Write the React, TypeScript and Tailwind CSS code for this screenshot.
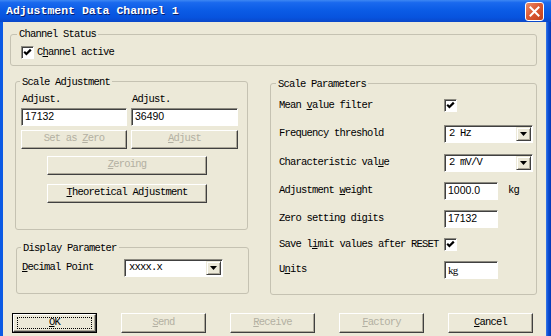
import React from "react";

const mono = "font-['Liberation_Mono','DejaVu_Sans_Mono',monospace] text-[10.5px] tracking-[-0.8px] text-black";

function U({ children }: { children: React.ReactNode }) {
  return <span className="underline underline-offset-[1px]">{children}</span>;
}

function Group({
  title,
  legend = "ml-[5px]",
  className = "",
  inner = "",
  children,
}: {
  title: string;
  legend?: string;
  className?: string;
  inner?: string;
  children: React.ReactNode;
}) {
  return (
    <fieldset className={"min-w-0 rounded-[3px] border border-[#c5c2b2] p-0 " + className}>
      <legend className={"px-[2px] leading-[12px] " + legend}>{title}</legend>
      <div className={inner}>{children}</div>
    </fieldset>
  );
}

function Btn({
  children,
  disabled,
  isDefault,
  className = "",
}: {
  children: React.ReactNode;
  disabled?: boolean;
  isDefault?: boolean;
  className?: string;
}) {
  const face =
    "flex h-full w-full items-center justify-center border border-t-white border-l-white border-b-[#404040] border-r-[#404040] bg-[#ece9d8] shadow-[inset_-1px_-1px_0_#aca899]";
  return (
    <div className={(isDefault ? "border border-black " : "") + className}>
      <div className={face + (disabled ? " text-[#b3b0a2]" : " text-black")}>
        {isDefault ? (
          <div className="flex h-[12px] w-[75px] items-center justify-center border border-dotted border-black">
            <span>{children}</span>
          </div>
        ) : (
          <span>{children}</span>
        )}
      </div>
    </div>
  );
}

const sunken =
  "border border-t-[#8c8a80] border-l-[#8c8a80] border-b-white border-r-white shadow-[inset_1px_1px_0_#404040] bg-white";

function Field({ value, className = "", sans = true }: { value: string; className?: string; sans?: boolean }) {
  return (
    <div
      className={
        "flex h-[18px] items-center pl-[3px] " +
        sunken +
        " " +
        (sans ? "font-['Liberation_Sans',Arial,sans-serif] text-[10.5px] tracking-normal " : "") +
        className
      }
    >
      {value}
    </div>
  );
}

function Combo({ value, className = "" }: { value: string; className?: string }) {
  return (
    <div className={"flex h-[18px] items-stretch " + sunken + " " + className}>
      <div className="flex flex-1 items-center pl-[4px]">{value}</div>
      <div className="m-px flex w-[15px] items-center justify-center border border-t-[#ece9d8] border-l-[#ece9d8] border-b-[#404040] border-r-[#404040] bg-[#ece9d8] shadow-[inset_1px_1px_0_#fff,inset_-1px_-1px_0_#aca899]">
        <svg width="7" height="4" viewBox="0 0 7 4">
          <path d="M0 0h7L3.5 4z" fill="#000" />
        </svg>
      </div>
    </div>
  );
}

function Check() {
  return (
    <div className={"flex h-[13px] w-[13px] shrink-0 items-center justify-center " + sunken}>
      <svg width="9" height="9" viewBox="0 0 9 9">
        <path d="M1.2 3.8 L3.4 6 L7.8 1.6" stroke="#000" strokeWidth="2.2" fill="none" />
      </svg>
    </div>
  );
}

function Row({ label, className = "", children }: { label: React.ReactNode; className?: string; children: React.ReactNode }) {
  return (
    <div className={"flex h-[18px] items-center " + className}>
      <div className="w-[165px] shrink-0">{label}</div>
      {children}
    </div>
  );
}

export default function App() {
  return (
    <div className={"flex h-[336px] w-[551px] flex-col overflow-hidden " + mono}>
      {/* Title bar */}
      <div className="flex h-[22px] shrink-0 items-center justify-between bg-[linear-gradient(to_bottom,#3d87f3_0%,#1a69ee_12%,#0b5ce6_45%,#0753de_80%,#0a48c9_100%)] pl-[6px] pr-[7px]">
        <span className="text-[11.5px] font-bold tracking-normal text-white [text-shadow:1px_1px_0_#0a1d6a]">
          Adjustment Data Channel 1
        </span>
        <div className="flex h-[19px] w-[19px] items-center justify-center rounded-[3px] border border-white bg-[linear-gradient(135deg,#ec8d6c_0%,#dc5a35_45%,#c2401b_100%)]">
          <svg width="11" height="11" viewBox="0 0 11 11">
            <path d="M1.5 1.5 L9.5 9.5 M9.5 1.5 L1.5 9.5" stroke="#fff" strokeWidth="2" strokeLinecap="square" />
          </svg>
        </div>
      </div>

      <div className="flex flex-1">
        <div className="w-[3px] bg-[#0b5ae4]" />

        {/* Client area */}
        <div className="flex flex-1 flex-col bg-[#ece9d8] pl-[7px] pt-[6px]">
          <Group title="Channel Status" legend="ml-[6px]" className="w-[527px]" inner="pb-[4px] pl-[10px] pt-[5px]">
            <div className="flex items-center gap-[3px]">
              <Check />
              <span>
                C<U>h</U>annel active
              </span>
            </div>
          </Group>

          <div className="mt-[10px] flex items-start gap-[21px] pl-[5px]">
            {/* Left column */}
            <div className="flex w-[234px] flex-col">
              <Group title="Scale Adjustment" legend="ml-[4px]" className="w-[233px]" inner="pb-[26px] pl-[5px]">
                <div className="mt-[5px] grid grid-cols-[106px_107px] gap-x-[4px] leading-[12px]">
                  <span className="pl-px">Adjust.</span>
                  <span className="pl-px">Adjust.</span>
                </div>
                <div className="mt-[3px] grid grid-cols-[106px_107px] gap-x-[4px]">
                  <Field value="17132" />
                  <Field value="36490" />
                </div>
                <div className="mt-[4px] grid grid-cols-[106px_107px] gap-x-[4px]">
                  <Btn disabled className="h-[19px]">
                    Set as <U>Z</U>ero
                  </Btn>
                  <Btn disabled className="h-[19px]">
                    <U>A</U>djust
                  </Btn>
                </div>
                <Btn disabled className="ml-[26px] mt-[7px] h-[19px] w-[160px]">
                  <U>Z</U>eroing
                </Btn>
                <Btn className="ml-[26px] mt-[9px] h-[19px] w-[160px]">
                  <U>T</U>heoretical Adjustment
                </Btn>
              </Group>

              <Group title="Display Parameter" legend="ml-[4px]" className="ml-px mt-[12px] w-[233px]" inner="pb-[16px] pl-[5px]">
                <div className="mt-[5px] flex h-[18px] items-center">
                  <span className="w-[102px] shrink-0">
                    <U>D</U>ecimal Point
                  </span>
                  <Combo value="xxxx.x" className="w-[99px]" />
                </div>
              </Group>
            </div>

            {/* Right column */}
            <Group title="Scale Parameters" legend="ml-[5px]" className="mt-[2px] w-[267px]" inner="pb-[15px] pl-[8px]">
              <Row label={<>Mean <U>v</U>alue filter</>} className="mt-[7px]">
                <Check />
              </Row>
              <Row label="Frequency threshold" className="mt-[10px]">
                <Combo value="2 Hz" className="w-[89px]" />
              </Row>
              <Row label={<>Characteristic val<U>u</U>e</>} className="mt-[11px]">
                <Combo value="2 mV/V" className="w-[89px]" />
              </Row>
              <Row label={<>Adjustment <U>w</U>eight</>} className="mt-[10px]">
                <Field value="1000.0" className="w-[54px]" />
                <span className="ml-[10px]">kg</span>
              </Row>
              <Row label="Zero setting digits" className="mt-[10px]">
                <Field value="17132" className="w-[54px]" />
              </Row>
              <Row label={<>Save l<U>i</U>mit values after RESET</>} className="mt-[8px]">
                <Check />
              </Row>
              <Row label={<>U<U>n</U>its</>} className="mt-[7px]">
                <Field value="kg" sans={false} className="w-[54px] font-['Liberation_Serif',serif] text-[11px]" />
              </Row>
            </Group>
          </div>

          {/* Dialog buttons */}
          <div className="ml-[2px] mt-[18px] flex gap-[24px]">
            <Btn isDefault className="h-[20px] w-[85px]">
              <U>O</U>K
            </Btn>
            <Btn disabled className="h-[20px] w-[85px]">
              <U>S</U>end
            </Btn>
            <Btn disabled className="h-[20px] w-[85px]">
              <U>R</U>eceive
            </Btn>
            <Btn disabled className="h-[20px] w-[85px]">
              <U>F</U>actory
            </Btn>
            <Btn className="h-[20px] w-[85px]">
              <U>C</U>ancel
            </Btn>
          </div>
        </div>

        <div className="w-[5px] bg-[linear-gradient(to_right,#3a7ae9_0%,#0b4fd6_40%,#0337b5_100%)]" />
      </div>
    </div>
  );
}
